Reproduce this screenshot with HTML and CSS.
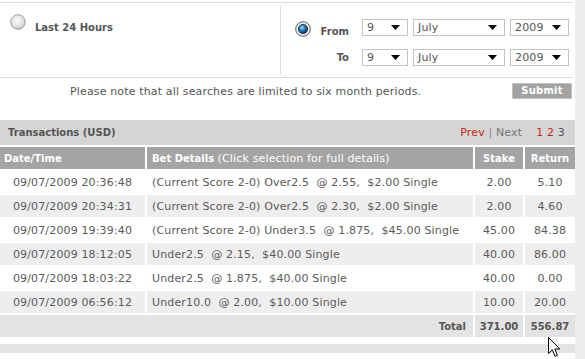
FILE: index.html
```html
<!DOCTYPE html>
<html>
<head>
<meta charset="utf-8">
<link rel="stylesheet" href="styles.css">
</head>
<body>
<div class="page">
  <div class="main">
    <div class="search">
      <div class="opt-left">
        <svg class="radio" viewBox="0 0 16 16">
          <defs>
            <radialGradient id="ru" cx="45%" cy="40%" r="65%">
              <stop offset="0" stop-color="#fafafa"/>
              <stop offset="0.6" stop-color="#e2e2e2"/>
              <stop offset="1" stop-color="#b8b8b8"/>
            </radialGradient>
          </defs>
          <circle cx="8" cy="8" r="7.3" fill="url(#ru)" stroke="#a0a0a0" stroke-width="1"/>
        </svg>
        <span class="opt-label">Last 24 Hours</span>
      </div>
      <div class="divider"></div>
      <div class="opt-right">
        <div class="range-row">
          <span class="radio-slot">
            <svg class="radio radio-on" viewBox="0 0 16 16">
              <defs>
                <radialGradient id="rb" cx="40%" cy="35%" r="70%">
                  <stop offset="0" stop-color="#b9e6ff"/>
                  <stop offset="0.35" stop-color="#2f8fd0"/>
                  <stop offset="1" stop-color="#06264a"/>
                </radialGradient>
              </defs>
              <circle cx="8" cy="8" r="7.3" fill="#ececec" stroke="#606060" stroke-width="1"/>
              <circle cx="8" cy="8" r="4.6" fill="url(#rb)" stroke="#0b2238" stroke-width="0.8"/>
            </svg>
          </span>
          <span class="range-label from">From</span>
          <div class="selects">
            <div class="select day"><span>9</span><svg class="arrow" viewBox="0 0 9 5"><polygon points="0,0 9,0 4.5,5"/></svg></div>
            <div class="select month"><span>July</span><svg class="arrow" viewBox="0 0 9 5"><polygon points="0,0 9,0 4.5,5"/></svg></div>
            <div class="select year"><span>2009</span><svg class="arrow" viewBox="0 0 9 5"><polygon points="0,0 9,0 4.5,5"/></svg></div>
          </div>
        </div>
        <div class="range-row">
          <span class="radio-slot"></span>
          <span class="range-label">To</span>
          <div class="selects">
            <div class="select day"><span>9</span><svg class="arrow" viewBox="0 0 9 5"><polygon points="0,0 9,0 4.5,5"/></svg></div>
            <div class="select month"><span>July</span><svg class="arrow" viewBox="0 0 9 5"><polygon points="0,0 9,0 4.5,5"/></svg></div>
            <div class="select year"><span>2009</span><svg class="arrow" viewBox="0 0 9 5"><polygon points="0,0 9,0 4.5,5"/></svg></div>
          </div>
        </div>
      </div>
    </div>

    <div class="note">
      <span class="note-text">Please note that all searches are limited to six month periods.</span>
      <button class="btn">Submit</button>
    </div>

    <div class="bar">
      <span class="bar-title">Transactions (USD)</span>
      <span class="pager"><span class="red">Prev</span> <span class="sep">|</span> <span class="next">Next</span><span class="pages"><span class="red">1</span> <span class="red">2</span> <span class="cur">3</span></span></span>
    </div>

    <table class="tx">
      <colgroup>
        <col class="c-date"><col class="c-bet"><col class="c-stake"><col class="c-ret">
      </colgroup>
      <thead>
        <tr>
          <th class="h-date">Date/Time</th>
          <th class="h-bet">Bet Details <span class="h-note">(Click selection for full details)</span></th>
          <th class="h-num">Stake</th>
          <th class="h-num">Return</th>
        </tr>
      </thead>
      <tbody>
        <tr><td class="d-date">09/07/2009 20:36:48</td><td class="d-bet">(Current Score 2-0) Over2.5  @ 2.55,  $2.00 Single</td><td class="d-num">2.00</td><td class="d-num">5.10</td></tr>
        <tr><td class="d-date">09/07/2009 20:34:31</td><td class="d-bet">(Current Score 2-0) Over2.5  @ 2.30,  $2.00 Single</td><td class="d-num">2.00</td><td class="d-num">4.60</td></tr>
        <tr><td class="d-date">09/07/2009 19:39:40</td><td class="d-bet">(Current Score 2-0) Under3.5  @ 1.875,  $45.00 Single</td><td class="d-num">45.00</td><td class="d-num">84.38</td></tr>
        <tr><td class="d-date">09/07/2009 18:12:05</td><td class="d-bet">Under2.5  @ 2.15,  $40.00 Single</td><td class="d-num">40.00</td><td class="d-num">86.00</td></tr>
        <tr><td class="d-date">09/07/2009 18:03:22</td><td class="d-bet">Under2.5  @ 1.875,  $40.00 Single</td><td class="d-num">40.00</td><td class="d-num">0.00</td></tr>
        <tr><td class="d-date">09/07/2009 06:56:12</td><td class="d-bet">Under10.0  @ 2.00,  $10.00 Single</td><td class="d-num">10.00</td><td class="d-num">20.00</td></tr>
        <tr class="total"><td colspan="2" class="t-label">Total</td><td class="d-num">371.00</td><td class="d-num">556.87</td></tr>
      </tbody>
    </table>

    <div class="foot"></div>
  </div>
  <div class="side"></div>

  <svg class="cursor" viewBox="0 0 13 21" width="13" height="21">
    <path d="M0.5 0.5 L0.5 16.5 L4.3 12.8 L7 19.3 L9.4 18.3 L6.8 12 L11.8 12 Z" fill="#fff" stroke="#000" stroke-width="1" stroke-linejoin="miter"/>
  </svg>
</div>
</body>
</html>
```

FILE: styles.css
```css
* { box-sizing: border-box; }

body {
  margin: 0;
  font-family: "DejaVu Sans", Verdana, sans-serif;
  font-size: 11px;
  letter-spacing: 0.15px;
  color: #555;
  background: #fff;
}

.page {
  position: relative;
  display: flex;
  width: 585px;
  height: 359px;
  overflow: hidden;
}

.main { width: 575px; flex: none; }
.side { width: 10px; background: #eeeeee; }

/* search panel */
.search {
  display: flex;
  height: 76px;
  margin: 2px 2px 0 0;
  border-top: 1px solid #dcdcdc;
  border-bottom: 1px solid #dcdcdc;
}

.opt-left {
  width: 280px;
  display: flex;
  align-items: flex-start;
  padding: 11px 0 0 10px;
}

.radio { width: 16px; height: 16px; display: block; flex: none; }
.opt-left .radio { margin-right: 9px; }

.opt-label {
  font-weight: bold;
  font-size: 10px;
  letter-spacing: 0;
  line-height: 16px;
  margin-top: 6px;
  color: #555;
}

.divider { width: 1px; background: #dcdcdc; margin: 2px 0 3px; }

.opt-right {
  display: flex;
  flex-direction: column;
  gap: 13px;
  padding: 16px 0 0 14px;
}

.range-row { display: flex; height: 17px; }
.radio-slot { width: 16px; flex: none; }
.radio-on { margin-top: 2px; }

.range-label {
  width: 38px;
  text-align: right;
  font-weight: bold;
  font-size: 10px;
  letter-spacing: 0;
  line-height: 17px;
  color: #555;
}
.range-label.from { padding-top: 4px; }

.selects { display: flex; gap: 5px; margin-left: 13px; }

.select {
  height: 17px;
  border: 1px solid #c4c4c4;
  background: #fff;
  display: flex;
  align-items: center;
  justify-content: space-between;
  padding: 0 7px 0 4px;
  color: #555;
  font-size: 11px;
  line-height: 13px;
}
.select span { margin-top: -1px; }
.select.day { width: 46px; }
.select.month { width: 92px; }
.select.year { width: 59px; }

.arrow { width: 9px; height: 5px; display: block; fill: #000; }

/* note row */
.note {
  display: flex;
  align-items: center;
  padding: 5px 3px 21px 0;
}
.note-text { flex: 1; padding-left: 70px; color: #555; }

.btn {
  width: 60px;
  height: 16px;
  padding: 0;
  border: 1px solid #c2c2c2;
  background: #a2a2a2;
  color: #fff;
  font-family: inherit;
  font-weight: bold;
  font-size: 10px;
  letter-spacing: 0.2px;
  line-height: 14px;
}

/* transactions bar */
.bar {
  height: 25px;
  background: #d5d5d5;
  display: flex;
  align-items: center;
  justify-content: space-between;
  padding: 0 10px 0 8px;
}
.bar-title { font-weight: bold; font-size: 10px; letter-spacing: 0; color: #555; }
.pager { color: #777; }
.red { color: #d0260c; }
.sep { color: #888; }
.next { color: #777; }
.pages { margin-left: 14px; }
.cur { color: #555; }

/* table */
.tx {
  border-collapse: separate;
  border-spacing: 2px;
  width: 579px;
  margin: 0 -2px;
  table-layout: fixed;
}
.c-date { width: 145px; }
.c-bet { width: 326px; }
.c-stake { width: 48px; }
.c-ret { width: 50px; }

.tx th, .tx td {
  height: 22px;
  padding: 0;
  white-space: pre;
  overflow: hidden;
}

.tx th {
  background: #a4a4a4;
  color: #fff;
  font-weight: bold;
  font-size: 10px;
  letter-spacing: 0;
  text-align: left;
}
.h-date { padding-left: 4px !important; }
.h-bet { padding-left: 5px !important; }
.h-note { font-weight: normal; font-size: 11px; letter-spacing: 0.15px; }
.tx th.h-num { text-align: center; }

.tx td { color: #5a5a5a; font-size: 11px; }
.tx tbody tr:nth-child(even) td { background: #eeeeee; }
.d-date { text-align: center; }
.d-bet { padding-left: 5px !important; }
.d-num { text-align: center; }

.tx tr.total td {
  background: #e3e3e3;
  font-weight: bold;
  font-size: 10px;
  letter-spacing: 0;
  color: #555;
}
.tx td.t-label { text-align: right; padding-right: 7px; }

.foot { height: 9px; margin-top: 5px; background: #e3e3e3; }

.cursor {
  position: absolute;
  left: 548px;
  top: 337px;
}
```
